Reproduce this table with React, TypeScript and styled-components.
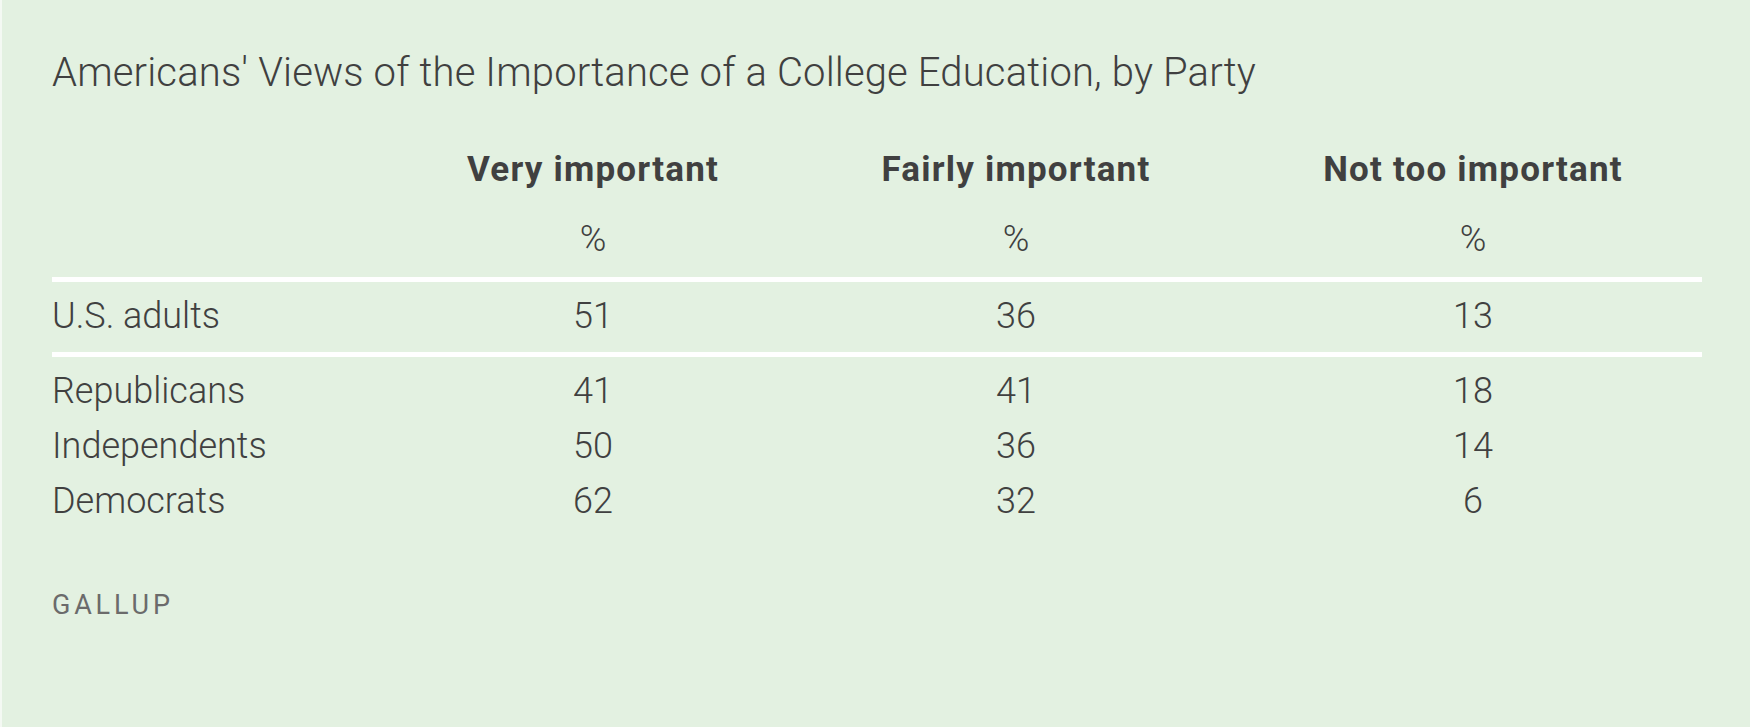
import styled, { createGlobalStyle } from "styled-components";

const GlobalStyle = createGlobalStyle`
  html, body {
    margin: 0;
    padding: 0;
    background: #f4f9f3;
  }
  body {
    font-family: Roboto, "Liberation Sans", sans-serif;
  }
`;

const COLS = "346px 390px 456px 458px";

const rows = [
  { label: "Republicans", values: [41, 41, 18] },
  { label: "Independents", values: [50, 36, 14] },
  { label: "Democrats", values: [62, 32, 6] },
];

function App() {
  return (
    <Page>
      <GlobalStyle />
      <Title>Americans' Views of the Importance of a College Education, by Party</Title>
      <HeadRow>
        <span />
        <HeadCell>Very important</HeadCell>
        <HeadCell>Fairly important</HeadCell>
        <HeadCell>Not too important</HeadCell>
      </HeadRow>
      <UnitRow>
        <span />
        <Cell>%</Cell>
        <Cell>%</Cell>
        <Cell>%</Cell>
      </UnitRow>
      <Rule />
      <Group>
        <Row>
          <Label>U.S. adults</Label>
          <Cell>51</Cell>
          <Cell>36</Cell>
          <Cell>13</Cell>
        </Row>
      </Group>
      <Rule />
      <Group $last>
        {rows.map((r) => (
          <Row key={r.label}>
            <Label>{r.label}</Label>
            {r.values.map((v, i) => (
              <Cell key={i}>{v}</Cell>
            ))}
          </Row>
        ))}
      </Group>
      <Source>GALLUP</Source>
    </Page>
  );
}

export default App;

const Page = styled.div`
  min-height: 100vh;
  box-sizing: border-box;
  margin-left: 2px;
  padding: 53px 48px 0 50px;
  background: #e3f1e1;
  color: #404040;
`;

const Title = styled.h1`
  margin: 0;
  font-size: 40px;
  line-height: 40px;
  font-weight: 300;
  letter-spacing: 0.15px;
`;

const Grid = styled.div`
  display: grid;
  grid-template-columns: ${COLS};
`;

const HeadRow = styled(Grid)`
  margin-top: 60px;
  font-size: 35px;
  line-height: 34px;
  font-weight: 700;
  letter-spacing: 1.2px;
`;

const HeadCell = styled.div`
  text-align: center;
`;

const UnitRow = styled(Grid)`
  margin-top: 34px;
  font-size: 36px;
  line-height: 36px;
  font-weight: 300;
`;

const Rule = styled.div`
  height: 5px;
  margin-top: 20px;
  background: #ffffff;
`;

const Group = styled.div<{ $last?: boolean }>`
  padding: 7px 0 ${(p) => (p.$last ? "0" : "8px")};

  & + ${Rule} {
    margin-top: 0;
  }
`;

const Row = styled(Grid)`
  font-size: 36px;
  line-height: 55px;
  font-weight: 300;
`;

const Label = styled.div`
  text-align: left;
`;

const Cell = styled.div`
  text-align: center;
`;

const Source = styled.div`
  margin-top: 63px;
  font-size: 27px;
  line-height: 27px;
  letter-spacing: 3.8px;
  color: #6b6b6b;
`;
